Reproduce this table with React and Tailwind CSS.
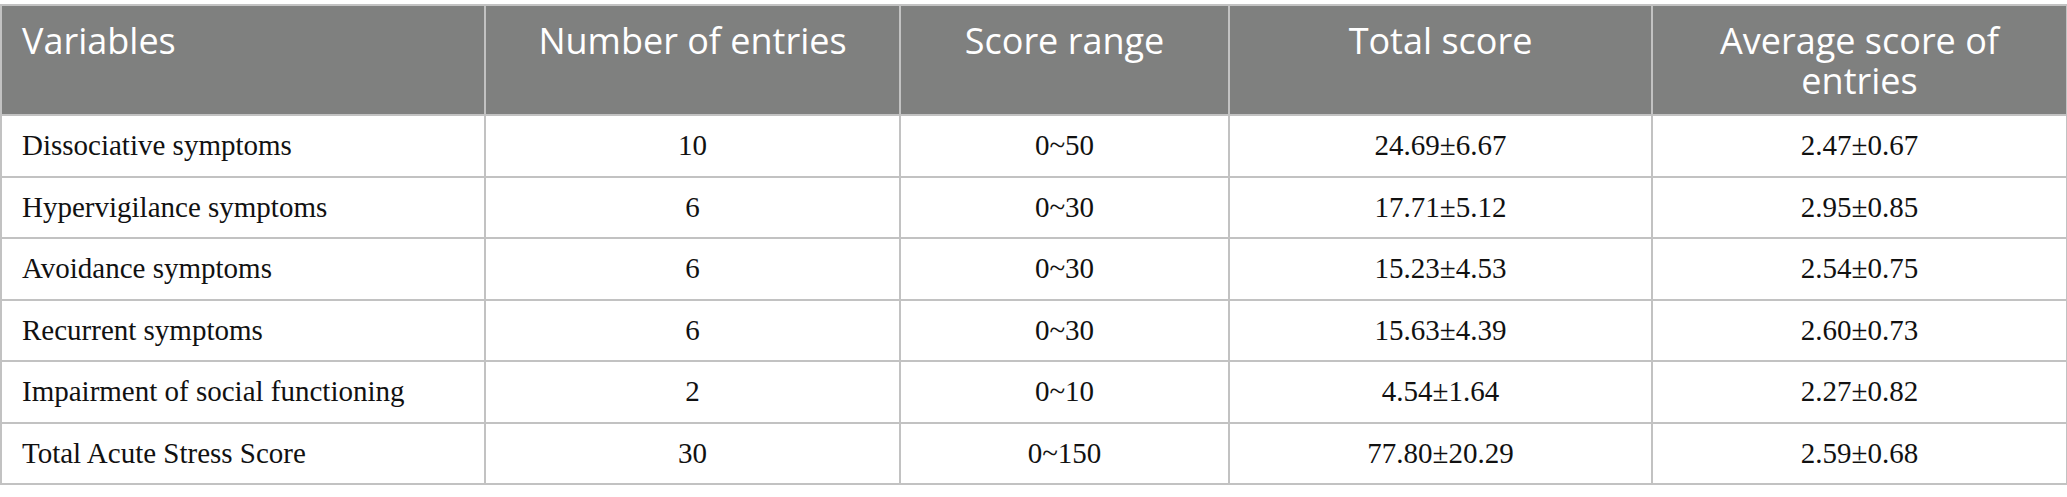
import React from 'react';

const rows = [
  ['Dissociative symptoms', '10', '0~50', '24.69±6.67', '2.47±0.67'],
  ['Hypervigilance symptoms', '6', '0~30', '17.71±5.12', '2.95±0.85'],
  ['Avoidance symptoms', '6', '0~30', '15.23±4.53', '2.54±0.75'],
  ['Recurrent symptoms', '6', '0~30', '15.63±4.39', '2.60±0.73'],
  ['Impairment of social functioning', '2', '0~10', '4.54±1.64', '2.27±0.82'],
  ['Total Acute Stress Score', '30', '0~150', '77.80±20.29', '2.59±0.68'],
];

export default function App() {
  return (
    <div className="bg-white pt-[4px] w-[2067px] h-[497px]">
      <table className="border-collapse table-fixed w-[2066px]">
        <colgroup>
          <col className="w-[484px]" />
          <col className="w-[415px]" />
          <col className="w-[329px]" />
          <col className="w-[423px]" />
          <col className="w-[415px]" />
        </colgroup>
        <thead>
          <tr className="bg-[#7f807f] text-white font-['Open_Sans',sans-serif] text-[36px] leading-[40px] h-[110px]">
            <th className="border-2 border-[#c2c2c2] align-top font-normal text-left pl-[20px] pt-[15px]">Variables</th>
            <th className="border-2 border-[#c2c2c2] align-top font-normal text-center pt-[15px]">Number of entries</th>
            <th className="border-2 border-[#c2c2c2] align-top font-normal text-center pt-[15px]">Score range</th>
            <th className="border-2 border-[#c2c2c2] align-top font-normal text-center pt-[15px]">Total score</th>
            <th className="border-2 border-[#c2c2c2] align-top font-normal text-center pt-[15px] px-[30px]">Average score of entries</th>
          </tr>
        </thead>
        <tbody className="font-['Liberation_Serif',serif] text-[29px] text-[#111]">
          {rows.map((r) => (
            <tr key={r[0]} className="h-[61.5px]">
              <td className="border-2 border-[#c2c2c2] pl-[20px] align-middle">{r[0]}</td>
              <td className="border-2 border-[#c2c2c2] text-center align-middle">{r[1]}</td>
              <td className="border-2 border-[#c2c2c2] text-center align-middle">{r[2]}</td>
              <td className="border-2 border-[#c2c2c2] text-center align-middle">{r[3]}</td>
              <td className="border-2 border-[#c2c2c2] text-center align-middle">{r[4]}</td>
            </tr>
          ))}
        </tbody>
      </table>
    </div>
  );
}
